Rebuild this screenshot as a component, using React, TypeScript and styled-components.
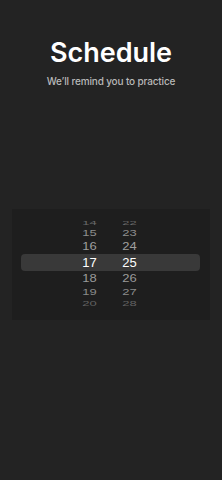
import React from "react";
import styled, { createGlobalStyle } from "styled-components";

const Global = createGlobalStyle`
  html, body { margin: 0; padding: 0; background: #232323; }
  #root { min-height: 480px; }
`;

const Page = styled.div`
  min-height: 480px;
  background: #232323;
  display: flex;
  flex-direction: column;
  align-items: stretch;
  font-family: Inter, "Liberation Sans", sans-serif;
`;

const Header = styled.header`
  padding-top: 38px;
  display: flex;
  flex-direction: column;
  align-items: center;
`;

const Title = styled.h1`
  margin: 0;
  font-size: 27px;
  line-height: 29px;
  font-weight: 600;
  color: #ffffff;
`;

const Subtitle = styled.p`
  margin: 8px 0 0;
  font-size: 10px;
  line-height: 12px;
  font-weight: 500;
  letter-spacing: -0.15px;
  color: #b8b8b8;
`;

const Panel = styled.div`
  margin: 122px 12px 0;
  height: 111px;
  background: #1e1e1e;
  padding-top: 7px;
  box-sizing: border-box;
  display: flex;
  flex-direction: column;
`;

const Row = styled.div<{ $h: number; $selected?: boolean }>`
  height: ${(p) => p.$h}px;
  display: grid;
  grid-template-columns: ${(p) => (p.$selected ? "56px" : "65px")} 25px 15px 25px;
  align-items: center;
  margin: ${(p) => (p.$selected ? "0 10px 0 9px" : "0")};
  background: ${(p) => (p.$selected ? "#393939" : "transparent")};
  border-radius: ${(p) => (p.$selected ? "4px" : "0")};
`;

const Num = styled.span<{ $scale: number; $color: string; $col: number }>`
  grid-column: ${(p) => p.$col};
  text-align: center;
  font-family: "Liberation Sans", Arial, sans-serif;
  font-size: 13px;
  line-height: 13px;
  color: ${(p) => p.$color};
  transform: scaleY(${(p) => p.$scale});
  display: block;
`;

const rows = [
  { a: 14, b: 22, h: 10, s: 0.45, c: "#686868" },
  { a: 15, b: 23, h: 12, s: 0.74, c: "#8e8e8e" },
  { a: 16, b: 24, h: 16, s: 0.86, c: "#9e9e9e" },
  { a: 17, b: 25, h: 17, s: 1, c: "#ffffff", sel: true },
  { a: 18, b: 26, h: 14, s: 0.8, c: "#9a9a9a" },
  { a: 19, b: 27, h: 12, s: 0.74, c: "#8a8a8a" },
  { a: 20, b: 28, h: 10, s: 0.5, c: "#626262" },
];

export default function App() {
  return (
    <>
      <Global />
      <Page>
        <Header>
          <Title>Schedule</Title>
          <Subtitle>We’ll remind you to practice</Subtitle>
        </Header>
        <Panel>
          {rows.map((r) => (
            <Row key={r.a} $h={r.h} $selected={r.sel}>
              <Num $col={2} $scale={r.s} $color={r.c}>{r.a}</Num>
              <Num $col={4} $scale={r.s} $color={r.c}>{r.b}</Num>
            </Row>
          ))}
        </Panel>
      </Page>
    </>
  );
}
